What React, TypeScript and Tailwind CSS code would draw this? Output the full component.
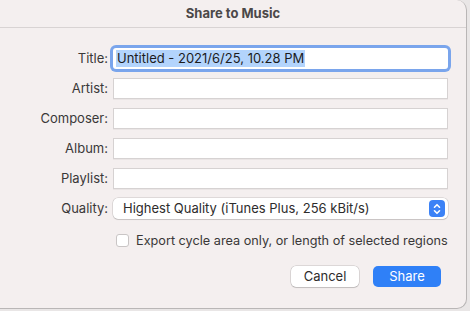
import React from "react";

const labels = ["Artist:", "Composer:", "Album:", "Playlist:"];

export default function App() {
  return (
    <div className="w-[470px] h-[311px] bg-[#e9e6e6] overflow-hidden" style={{ fontFamily: "Inter, 'Liberation Sans', sans-serif" }}>
      <div className="w-[467px] h-[309px] bg-[#f4efef] rounded-tr-[10px] rounded-br-[10px] border-r border-b border-[#b9b6b6] flex flex-col">
        <div className="h-[28px] flex items-center justify-center border-b border-[#d8d3d3] shrink-0">
          <span className="text-[13px] font-bold text-[#4b4848]">Share to Music</span>
        </div>
        <div className="pt-[20px] grid grid-cols-[108px_335px] gap-x-[5px] gap-y-[9px] text-[13px] text-[#3a3838]">
          <div className="h-[21px] flex items-center justify-end">Title:</div>
          <div className="h-[21px] rounded-[3px] bg-white ring-[3px] ring-[#7aa5ec] flex items-center pl-[3px]">
            <span className="bg-[#b3d4fc] text-[#1c1c1c] leading-[17px] px-[1px]">Untitled - 2021/6/25, 10.28 PM</span>
          </div>
          {labels.map((l) => (
            <React.Fragment key={l}>
              <div className="h-[21px] flex items-center justify-end">{l}</div>
              <div className="h-[21px] bg-white border border-[#d6d2d2] shadow-[0_1px_0_rgba(0,0,0,0.04)]" />
            </React.Fragment>
          ))}
          <div className="h-[21px] flex items-center justify-end">Quality:</div>
          <div className="h-[21px] bg-white rounded-[5px] shadow-[0_0_0_0.5px_rgba(0,0,0,0.18),0_1px_1px_rgba(0,0,0,0.1)] flex items-center justify-between pl-[10px] pr-[3px]">
            <span className="text-[#2e2c2c]">Highest Quality (iTunes Plus, 256 kBit/s)</span>
            <div className="w-[16px] h-[17px] rounded-[4px] bg-[#3c82f6] flex items-center justify-center">
              <svg width="8" height="12" viewBox="0 0 8 12" fill="none" stroke="white" strokeWidth="1.6" strokeLinecap="round" strokeLinejoin="round">
                <path d="M1.5 4.2 L4 1.7 L6.5 4.2" />
                <path d="M1.5 7.8 L4 10.3 L6.5 7.8" />
              </svg>
            </div>
          </div>
        </div>
        <div className="mt-[12px] ml-[116px] flex items-center gap-[7px] text-[12.7px] text-[#3a3838]">
          <div className="w-[13px] h-[13px] rounded-[3px] bg-white border border-[#c9c5c5]" />
          <span>Export cycle area only, or length of selected regions</span>
        </div>
        <div className="mt-[16px] flex justify-end gap-[14px] pr-[25px] text-[13px]">
          <div className="w-[68px] h-[21px] rounded-[5px] bg-white shadow-[0_0_0_0.5px_rgba(0,0,0,0.2),0_1px_1px_rgba(0,0,0,0.12)] flex items-center justify-center text-[#2e2c2c]">Cancel</div>
          <div className="w-[68px] h-[21px] rounded-[5px] bg-[#2f80f7] flex items-center justify-center text-white">Share</div>
        </div>
      </div>
    </div>
  );
}
